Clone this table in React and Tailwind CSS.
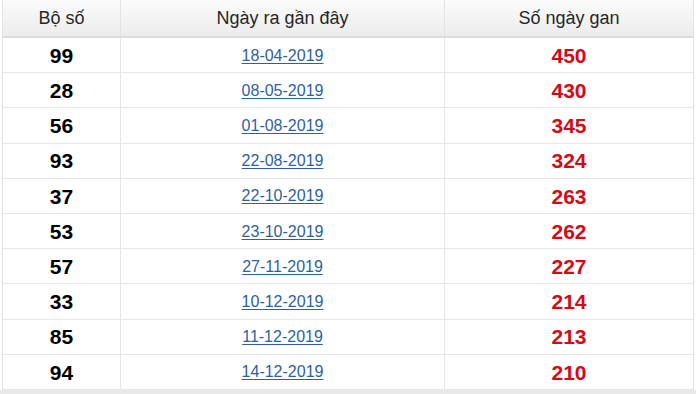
const rows = [
  ['99', '18-04-2019', '450'],
  ['28', '08-05-2019', '430'],
  ['56', '01-08-2019', '345'],
  ['93', '22-08-2019', '324'],
  ['37', '22-10-2019', '263'],
  ['53', '23-10-2019', '262'],
  ['57', '27-11-2019', '227'],
  ['33', '10-12-2019', '214'],
  ['85', '11-12-2019', '213'],
  ['94', '14-12-2019', '210'],
]

export default function App() {
  return (
    <div className="w-[696px] h-[394px] bg-white overflow-hidden font-['Liberation_Sans',Arial,sans-serif]">
      <div className="ml-[2px] w-[692px] border-l border-r border-[#e3e3e3]">
        <div className="grid grid-cols-[118px_324px_1fr] h-[38px] bg-gradient-to-b from-[#fbfbfb] to-[#ececec] border-b-2 border-[#dcdcdc] text-[18px] text-[#262626]">
          <div className="flex items-center justify-center border-r border-[#e3e3e3]">Bộ số</div>
          <div className="flex items-center justify-center border-r border-[#e3e3e3]">Ngày ra gần đây</div>
          <div className="flex items-center justify-center">Số ngày gan</div>
        </div>
        {rows.map(([so, ngay, gan]) => (
          <div key={so} className="grid grid-cols-[118px_324px_1fr] h-[35.2px] border-b border-[#e6e6e6]">
            <div className="flex items-center justify-center pt-px border-r border-[#e6e6e6] text-[21px] font-bold text-black">{so}</div>
            <div className="flex items-center justify-center pt-px border-r border-[#e6e6e6]">
              <a className="text-[16px] text-[#2e5f9e] underline underline-offset-2">{ngay}</a>
            </div>
            <div className="flex items-center justify-center pt-px text-[21px] font-bold text-[#d30a18]">{gan}</div>
          </div>
        ))}
      </div>
      <div className="h-[4px] bg-[#e9e9e9]" />
    </div>
  )
}
